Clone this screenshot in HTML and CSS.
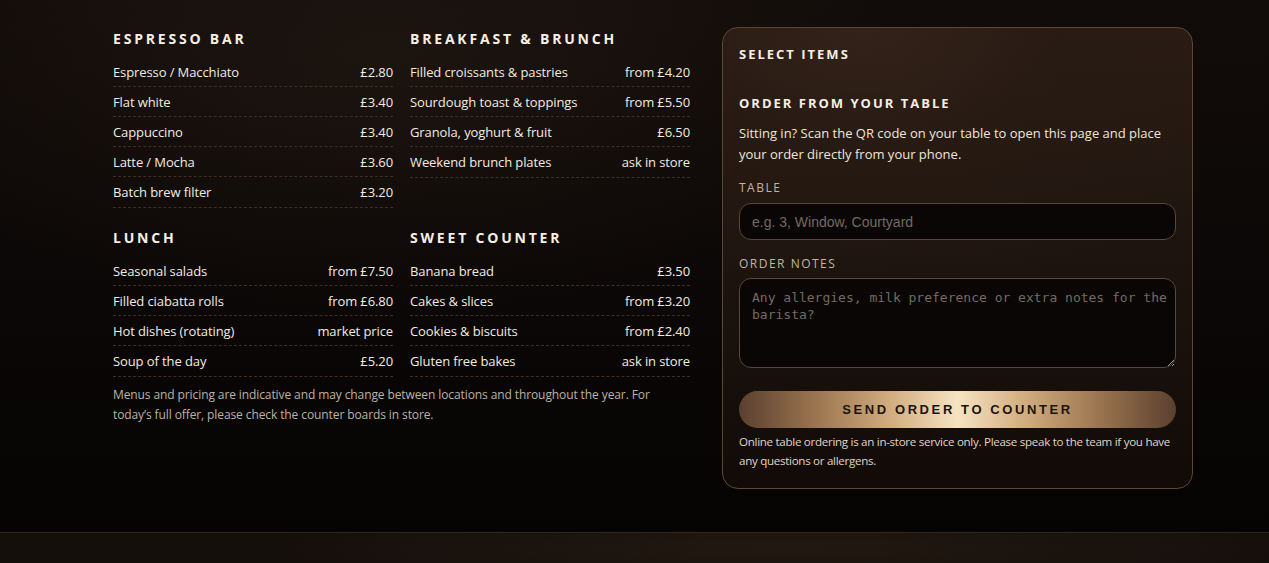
FILE: index.html
```html
<!DOCTYPE html>
<html lang="en">
<head>
<meta charset="utf-8">
<title>Menu</title>
<link rel="stylesheet" href="styles.css">
</head>
<body>
<main class="page">
  <div class="layout">
    <section class="menu">
      <div class="menu-grid">
        <div class="group">
          <h2 class="group-title">Espresso bar</h2>
          <ul class="items">
            <li class="item"><span>Espresso / Macchiato</span><span>£2.80</span></li>
            <li class="item"><span>Flat white</span><span>£3.40</span></li>
            <li class="item"><span>Cappuccino</span><span>£3.40</span></li>
            <li class="item"><span>Latte / Mocha</span><span>£3.60</span></li>
            <li class="item"><span>Batch brew filter</span><span>£3.20</span></li>
          </ul>
        </div>
        <div class="group">
          <h2 class="group-title">Breakfast &amp; brunch</h2>
          <ul class="items">
            <li class="item"><span>Filled croissants &amp; pastries</span><span>from £4.20</span></li>
            <li class="item"><span>Sourdough toast &amp; toppings</span><span>from £5.50</span></li>
            <li class="item"><span>Granola, yoghurt &amp; fruit</span><span>£6.50</span></li>
            <li class="item"><span>Weekend brunch plates</span><span>ask in store</span></li>
          </ul>
        </div>
        <div class="group">
          <h2 class="group-title">Lunch</h2>
          <ul class="items">
            <li class="item"><span>Seasonal salads</span><span>from £7.50</span></li>
            <li class="item"><span>Filled ciabatta rolls</span><span>from £6.80</span></li>
            <li class="item"><span>Hot dishes (rotating)</span><span>market price</span></li>
            <li class="item"><span>Soup of the day</span><span>£5.20</span></li>
          </ul>
        </div>
        <div class="group">
          <h2 class="group-title">Sweet counter</h2>
          <ul class="items">
            <li class="item"><span>Banana bread</span><span>£3.50</span></li>
            <li class="item"><span>Cakes &amp; slices</span><span>from £3.20</span></li>
            <li class="item"><span>Cookies &amp; biscuits</span><span>from £2.40</span></li>
            <li class="item"><span>Gluten free bakes</span><span>ask in store</span></li>
          </ul>
        </div>
      </div>
      <p class="menu-note">Menus and pricing are indicative and may change between locations and throughout the year. For today’s full offer, please check the counter boards in store.</p>
    </section>

    <aside class="panel">
      <h2 class="panel-title">Select items</h2>
      <h3 class="panel-sub">Order from your table</h3>
      <p class="panel-text">Sitting in? Scan the QR code on your table to open this page and place your order directly from your phone.</p>
      <form class="order-form">
        <label class="field-label" for="table">Table</label>
        <input class="field-input" id="table" type="text" placeholder="e.g. 3, Window, Courtyard">
        <label class="field-label notes-label" for="notes">Order notes</label>
        <textarea class="field-area" id="notes" placeholder="Any allergies, milk preference or extra notes for the barista?"></textarea>
        <button class="send-btn" type="button">Send order to counter</button>
      </form>
      <p class="panel-foot">Online table ordering is an in-store service only. Please speak to the team if you have any questions or allergens.</p>
    </aside>
  </div>
</main>
<footer class="site-footer"></footer>
</body>
</html>
```

FILE: styles.css
```css
* { box-sizing: border-box; }

html, body {
  margin: 0;
  padding: 0;
}

body {
  background: #060403;
  color: #f3ebe0;
  font-family: "Open Sans", "Noto Sans", sans-serif;
  font-size: 13px;
  min-height: 563px;
  display: flex;
  flex-direction: column;
}

.page {
  height: 532px;
  background:
    radial-gradient(ellipse 60% 70% at 30% 10%, rgba(40, 28, 20, 0.55), rgba(0,0,0,0) 70%),
    linear-gradient(180deg, #110c0a 0%, #0a0706 60%, #050403 100%);
}

.layout {
  display: flex;
  gap: 32px;
  padding: 27px 0 0 113px;
  align-items: flex-start;
}

.menu {
  width: 577px;
  padding-top: 2px;
}

.menu-grid {
  display: grid;
  grid-template-columns: 280px 280px;
  column-gap: 17px;
  row-gap: 20px;
}

.group-title {
  margin: 0 0 9px;
  font-size: 14px;
  line-height: 19px;
  font-weight: 700;
  letter-spacing: 2.8px;
  text-transform: uppercase;
  color: #f7efe4;
}

.items {
  list-style: none;
  margin: 0;
  padding: 0;
}

.item {
  display: flex;
  justify-content: space-between;
  padding: 6px 0 5px;
  line-height: 18px;
  letter-spacing: -0.1px;
  border-bottom: 1px dashed #3e2e24;
}

.item:last-child {
  padding-bottom: 6px;
}

.menu-note {
  margin: 8px 0 0;
  font-size: 12px;
  line-height: 20px;
  letter-spacing: -0.1px;
  color: #bdb1a4;
}

.panel {
  width: 471px;
  border: 1px solid #5e4630;
  border-radius: 16px;
  padding: 16px 16px 18px;
  background:
    radial-gradient(ellipse 90% 60% at 30% 0%, #33221a 0%, rgba(40,27,19,0.6) 45%, rgba(0,0,0,0) 100%),
    linear-gradient(180deg, #2a1c14 0%, #1c130e 55%, #110b08 100%);
}

.panel-title {
  margin: 0;
  font-size: 13px;
  line-height: 20px;
  font-weight: 700;
  letter-spacing: 2px;
  text-transform: uppercase;
  color: #f7efe4;
}

.panel-sub {
  margin: 29px 0 0;
  font-size: 13px;
  line-height: 20px;
  font-weight: 700;
  letter-spacing: 2px;
  text-transform: uppercase;
  color: #f7efe4;
}

.panel-text {
  margin: 10px 0 0;
  font-size: 13px;
  line-height: 21px;
  color: #f0e6da;
}

.order-form {
  display: flex;
  flex-direction: column;
  margin-top: 15px;
}

.field-label {
  font-size: 12px;
  line-height: 16px;
  letter-spacing: 1.5px;
  text-transform: uppercase;
  color: #c4b3a0;
  margin-bottom: 7px;
}

.notes-label {
  margin-top: 16px;
  margin-bottom: 6px;
}

.field-input,
.field-area {
  width: 100%;
  border: 1px solid #5e4630;
  border-radius: 12px;
  background: #0a0605;
  color: #f3ebe0;
  outline: none;
}

.field-input {
  height: 37px;
  padding: 0 12px;
  font-family: "Liberation Sans", Arial, sans-serif;
  font-size: 14px;
}

.field-area {
  height: 90px;
  padding: 10px 4px 10px 12px;
  font-family: "DejaVu Sans Mono", "Liberation Mono", monospace;
  font-size: 13px;
  line-height: 17px;
  resize: vertical;
}

.field-input::placeholder,
.field-area::placeholder {
  color: #756a60;
}

.send-btn {
  margin-top: 23px;
  height: 37px;
  border: 0;
  border-radius: 999px;
  background: linear-gradient(90deg, #5a4030 0%, #9c7650 18%, #d2ae80 35%, #f6e3c2 50%, #d2ae80 65%, #9c7650 82%, #5a4030 100%);
  font-family: "Liberation Sans", Arial, sans-serif;
  font-size: 13px;
  font-weight: 700;
  letter-spacing: 2.6px;
  text-transform: uppercase;
  color: #1c130d;
  cursor: pointer;
}

.panel-foot {
  margin: 4px 0 0;
  font-size: 11.6px;
  line-height: 19px;
  letter-spacing: -0.3px;
  color: #e0d4c6;
}

.site-footer {
  height: 31px;
  border-top: 1px solid #33261b;
  background:
    radial-gradient(ellipse 40% 140% at 62% 50%, #221811 0%, rgba(0,0,0,0) 100%),
    #150f0b;
}
```
